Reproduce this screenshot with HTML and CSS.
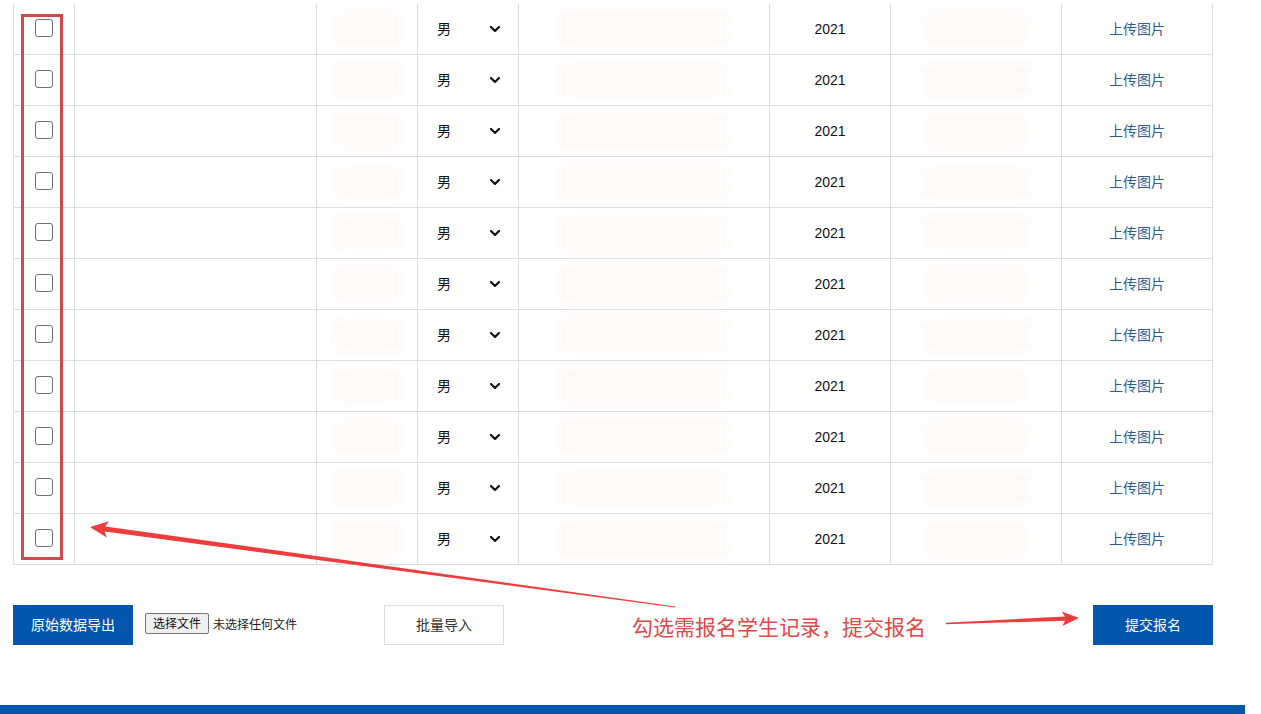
FILE: index.html
```html
<!DOCTYPE html>
<html lang="zh-CN">
<head>
<meta charset="utf-8">
<title>报名</title>
<link rel="stylesheet" href="styles.css">
</head>
<body>
<div class="page">
  <table class="grid">
    <colgroup>
      <col class="c1"><col class="c2"><col class="c3"><col class="c4"><col class="c5"><col class="c6"><col class="c7"><col class="c8">
    </colgroup>
    <tbody>
      <tr><td><input type="checkbox" class="box"></td><td></td><td><div class="blur b-sm"></div></td><td><div class="sex"><span>男</span><svg class="chev" viewBox="0 0 10 6" width="10" height="6"><polyline points="1,1 5,5 9,1"/></svg></div></td><td><div class="blur b-lg"></div></td><td class="num">2021</td><td><div class="blur b-md"></div></td><td><span class="link">上传图片</span></td></tr>
      <tr><td><input type="checkbox" class="box"></td><td></td><td><div class="blur b-sm"></div></td><td><div class="sex"><span>男</span><svg class="chev" viewBox="0 0 10 6" width="10" height="6"><polyline points="1,1 5,5 9,1"/></svg></div></td><td><div class="blur b-lg"></div></td><td class="num">2021</td><td><div class="blur b-md"></div></td><td><span class="link">上传图片</span></td></tr>
      <tr><td><input type="checkbox" class="box"></td><td></td><td><div class="blur b-sm"></div></td><td><div class="sex"><span>男</span><svg class="chev" viewBox="0 0 10 6" width="10" height="6"><polyline points="1,1 5,5 9,1"/></svg></div></td><td><div class="blur b-lg"></div></td><td class="num">2021</td><td><div class="blur b-md"></div></td><td><span class="link">上传图片</span></td></tr>
      <tr><td><input type="checkbox" class="box"></td><td></td><td><div class="blur b-sm"></div></td><td><div class="sex"><span>男</span><svg class="chev" viewBox="0 0 10 6" width="10" height="6"><polyline points="1,1 5,5 9,1"/></svg></div></td><td><div class="blur b-lg"></div></td><td class="num">2021</td><td><div class="blur b-md"></div></td><td><span class="link">上传图片</span></td></tr>
      <tr><td><input type="checkbox" class="box"></td><td></td><td><div class="blur b-sm"></div></td><td><div class="sex"><span>男</span><svg class="chev" viewBox="0 0 10 6" width="10" height="6"><polyline points="1,1 5,5 9,1"/></svg></div></td><td><div class="blur b-lg"></div></td><td class="num">2021</td><td><div class="blur b-md"></div></td><td><span class="link">上传图片</span></td></tr>
      <tr><td><input type="checkbox" class="box"></td><td></td><td><div class="blur b-sm"></div></td><td><div class="sex"><span>男</span><svg class="chev" viewBox="0 0 10 6" width="10" height="6"><polyline points="1,1 5,5 9,1"/></svg></div></td><td><div class="blur b-lg"></div></td><td class="num">2021</td><td><div class="blur b-md"></div></td><td><span class="link">上传图片</span></td></tr>
      <tr><td><input type="checkbox" class="box"></td><td></td><td><div class="blur b-sm"></div></td><td><div class="sex"><span>男</span><svg class="chev" viewBox="0 0 10 6" width="10" height="6"><polyline points="1,1 5,5 9,1"/></svg></div></td><td><div class="blur b-lg"></div></td><td class="num">2021</td><td><div class="blur b-md"></div></td><td><span class="link">上传图片</span></td></tr>
      <tr><td><input type="checkbox" class="box"></td><td></td><td><div class="blur b-sm"></div></td><td><div class="sex"><span>男</span><svg class="chev" viewBox="0 0 10 6" width="10" height="6"><polyline points="1,1 5,5 9,1"/></svg></div></td><td><div class="blur b-lg"></div></td><td class="num">2021</td><td><div class="blur b-md"></div></td><td><span class="link">上传图片</span></td></tr>
      <tr><td><input type="checkbox" class="box"></td><td></td><td><div class="blur b-sm"></div></td><td><div class="sex"><span>男</span><svg class="chev" viewBox="0 0 10 6" width="10" height="6"><polyline points="1,1 5,5 9,1"/></svg></div></td><td><div class="blur b-lg"></div></td><td class="num">2021</td><td><div class="blur b-md"></div></td><td><span class="link">上传图片</span></td></tr>
      <tr><td><input type="checkbox" class="box"></td><td></td><td><div class="blur b-sm"></div></td><td><div class="sex"><span>男</span><svg class="chev" viewBox="0 0 10 6" width="10" height="6"><polyline points="1,1 5,5 9,1"/></svg></div></td><td><div class="blur b-lg"></div></td><td class="num">2021</td><td><div class="blur b-md"></div></td><td><span class="link">上传图片</span></td></tr>
      <tr><td><input type="checkbox" class="box"></td><td></td><td><div class="blur b-sm"></div></td><td><div class="sex"><span>男</span><svg class="chev" viewBox="0 0 10 6" width="10" height="6"><polyline points="1,1 5,5 9,1"/></svg></div></td><td><div class="blur b-lg"></div></td><td class="num">2021</td><td><div class="blur b-md"></div></td><td><span class="link">上传图片</span></td></tr>
    </tbody>
  </table>

  <div class="actions">
    <button class="btn btn-primary">原始数据导出</button>
    <div class="file">
      <span class="file-btn">选择文件</span>
      <span class="file-label">未选择任何文件</span>
    </div>
    <button class="btn btn-plain">批量导入</button>
    <button class="btn btn-primary btn-submit">提交报名</button>
  </div>
</div>
<div class="footer-bar"></div>

<div class="annot">
  <div class="annot-box"></div>
  <div class="annot-text">勾选需报名学生记录，提交报名</div>
  <svg class="annot-arrows" width="1261" height="714" viewBox="0 0 1261 714">
    <polygon points="90,527 108.9,521.3 105.2,526.4 675.1,606.4 674.9,607.6 104.6,531.6 106.7,537.5"/>
    <polygon points="1079,618 1061.7,611.5 1064.9,616.5 946,622.8 946,624.2 1065.1,620.7 1062.3,625.9"/>
  </svg>
</div>
</body>
</html>
```

FILE: styles.css
```css
html, body {
  margin: 0;
  padding: 0;
  background: #ffffff;
}

body {
  font-family: "Liberation Sans", "Noto Sans CJK SC", sans-serif;
  color: #222;
  position: relative;
  height: 714px;
  overflow: hidden;
}

.page {
  padding: 4px 0 0 13px;
  width: 1200px;
}

.grid {
  border-collapse: collapse;
  table-layout: fixed;
  width: 1199px;
}

.c1 { width: 61px; }
.c2 { width: 242px; }
.c3 { width: 101px; }
.c4 { width: 101px; }
.c5 { width: 251px; }
.c6 { width: 121px; }
.c7 { width: 171px; }
.c8 { width: 151px; }

.grid td {
  border: 1px solid #dcdcdc;
  height: 50px;
  padding: 0;
  font-size: 14px;
  text-align: center;
  vertical-align: middle;
}

.grid tr:first-child td {
  border-top: none;
}

.box {
  appearance: none;
  -webkit-appearance: none;
  display: block;
  width: 18px;
  height: 18px;
  margin: -3px auto 0;
  border: 1px solid #707070;
  border-radius: 3px;
  background: #fff;
}

.sex {
  display: flex;
  align-items: center;
  justify-content: space-between;
  height: 20px;
  margin-top: -2px;
  padding: 0 18px 0 19px;
  font-family: "Noto Sans CJK SC", sans-serif;
  font-size: 14px;
  color: #111;
}

.chev {
  fill: none;
  stroke: #111;
  stroke-width: 2.2;
  stroke-linecap: round;
  stroke-linejoin: round;
  margin-top: 2px;
}

.num {
  font-family: "Liberation Sans", sans-serif;
  color: #111;
}

.link {
  display: inline-block;
  margin-bottom: 2px;
  font-family: "Noto Sans CJK SC", sans-serif;
  color: #2c5d8f;
}

.blur {
  margin: 0 auto;
  background: #fdfafa;
  border-radius: 8px;
  filter: blur(3px);
}

.b-sm { width: 68px; height: 36px; }
.b-lg { width: 170px; height: 40px; }
.b-md { width: 110px; height: 36px; }

.actions {
  display: flex;
  align-items: center;
  margin-top: 40px;
  height: 40px;
}

.btn {
  height: 40px;
  font-family: "Noto Sans CJK SC", sans-serif;
  font-size: 14px;
  padding: 0 0 3px 0;
  border-radius: 0;
  cursor: pointer;
}

.btn-primary {
  width: 120px;
  background: #0356ae;
  color: #fff;
  border: none;
}

.btn-plain {
  width: 120px;
  background: #fff;
  color: #333;
  border: 1px solid #dddddd;
}

.btn-submit {
  margin-left: auto;
}

.file {
  display: flex;
  align-items: center;
  gap: 4px;
  width: 239px;
  margin-left: 12px;
  margin-top: -3px;
  font-family: "Noto Sans CJK SC", sans-serif;
  font-size: 12px;
}

.file-btn {
  display: inline-block;
  padding: 0 7px 2px;
  line-height: 17px;
  border: 1px solid #767676;
  border-radius: 2px;
  background: #efefef;
  color: #111;
}

.file-label {
  color: #222;
  padding-bottom: 1px;
}

.footer-bar {
  margin-top: 60px;
  width: 1245px;
  height: 30px;
  background: #0356ae;
}

.annot {
  position: absolute;
  left: 0;
  top: 0;
  width: 1261px;
  height: 714px;
  pointer-events: none;
}

.annot-box {
  position: absolute;
  left: 21px;
  top: 14px;
  width: 36px;
  height: 540px;
  border: 3px solid #d4474a;
}

.annot-text {
  position: absolute;
  left: 632px;
  top: 616px;
  font-family: "Noto Sans CJK SC", sans-serif;
  font-size: 21px;
  line-height: 21px;
  color: #e04848;
  white-space: nowrap;
}

.annot-arrows {
  position: absolute;
  left: 0;
  top: 0;
}

.annot-arrows polygon {
  fill: #ee3b3b;
}
```
